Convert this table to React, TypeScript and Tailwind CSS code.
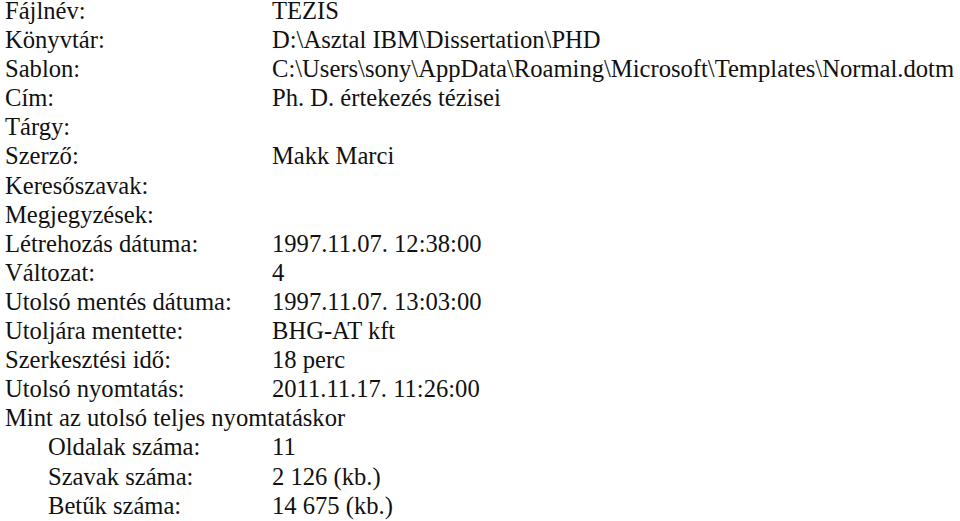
const rows: [string, string][] = [
  ["Fájlnév:", "TEZIS"],
  ["Könyvtár:", "D:\\Asztal IBM\\Dissertation\\PHD"],
  ["Sablon:", "C:\\Users\\sony\\AppData\\Roaming\\Microsoft\\Templates\\Normal.dotm"],
  ["Cím:", "Ph. D. értekezés tézisei"],
  ["Tárgy:", ""],
  ["Szerző:", "Makk Marci"],
  ["Keresőszavak:", ""],
  ["Megjegyzések:", ""],
  ["Létrehozás dátuma:", "1997.11.07. 12:38:00"],
  ["Változat:", "4"],
  ["Utolsó mentés dátuma:", "1997.11.07. 13:03:00"],
  ["Utoljára mentette:", "BHG-AT kft"],
  ["Szerkesztési idő:", "18 perc"],
  ["Utolsó nyomtatás:", "2011.11.17. 11:26:00"],
];

const stats: [string, string][] = [
  ["Oldalak száma:", "11"],
  ["Szavak száma:", "2 126 (kb.)"],
  ["Betűk száma:", "14 675 (kb.)"],
];

export default function App() {
  return (
    <div className="w-[960px] h-[521px] overflow-hidden bg-white text-[#111] font-['Liberation_Serif','Times_New_Roman',serif] text-[24.6px] leading-[22.5px] pl-[5px]">
      {rows.map(([k, v]) => (
        <div key={k} className="grid grid-cols-[267px_1fr] h-[29.1px] whitespace-nowrap">
          <span>{k}</span>
          <span>{v}</span>
        </div>
      ))}
      <div className="h-[29.1px] whitespace-nowrap">Mint az utolsó teljes nyomtatáskor</div>
      {stats.map(([k, v]) => (
        <div key={k} className="grid grid-cols-[224px_1fr] h-[29.1px] pl-[43px] whitespace-nowrap">
          <span>{k}</span>
          <span>{v}</span>
        </div>
      ))}
    </div>
  );
}
